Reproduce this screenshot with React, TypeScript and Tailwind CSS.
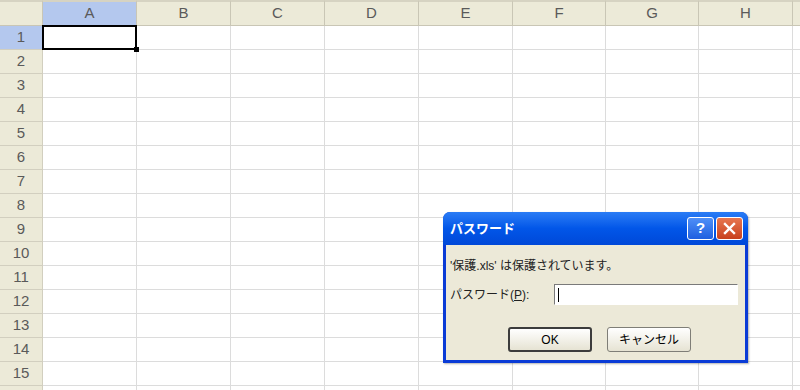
import React from 'react';

const cols = ['A', 'B', 'C', 'D', 'E', 'F', 'G', 'H', ''];
const rows = Array.from({ length: 16 }, (_, i) => i + 1);

function ColHeader({ label, active }: { label: string; active: boolean }) {
  return (
    <div
      className={
        'flex items-center justify-center border-t-2 border-t-[#d6d3c2] border-r border-b border-[#c9c6b5] text-[15px] text-[#5a5a5a] ' +
        (active ? 'bg-[#b4c8ee]' : 'bg-[#ecead8]')
      }
    >
      {label}
    </div>
  );
}

function RowHeader({ n }: { n: number }) {
  return (
    <div
      className={
        'flex items-center justify-center border-r border-b border-[#d2cfbf] text-[15px] text-[#5a5a5a] ' +
        (n === 1 ? 'bg-[#b4c8ee]' : 'bg-[#ecead8]')
      }
    >
      {n <= 15 ? n : ''}
    </div>
  );
}

function Cell({ selected }: { selected: boolean }) {
  if (selected) {
    return (
      <div className="relative border-r border-b border-[#dcdcdc] bg-white">
        <div className="absolute -left-[1px] -top-[1px] right-[-1px] bottom-[-1px] border-2 border-black" />
        <div className="absolute right-[-3px] bottom-[-3px] h-[5px] w-[5px] bg-black" />
      </div>
    );
  }
  return <div className="border-r border-b border-[#dcdcdc] bg-white" />;
}

function XpButton({ label, primary }: { label: string; primary?: boolean }) {
  return (
    <div
      className={
        'flex h-[25px] w-[84px] items-center justify-center rounded-[3px] bg-gradient-to-b from-white to-[#e6e3d3] text-[12px] text-black ' +
        (primary ? 'border-2 border-[#3c3c3c]' : 'border border-[#7f7e77]')
      }
    >
      {label}
    </div>
  );
}

function PasswordDialog() {
  return (
    <div className="absolute left-[443px] top-[212px] flex h-[151px] w-[305px] flex-col overflow-hidden rounded-t-[7px] bg-[#0a3bd6] shadow-[1px_1px_2px_rgba(0,0,0,0.3)]">
      <div className="flex h-[33px] items-center justify-between bg-gradient-to-b from-[#2a7cf5] via-[#0256e8] to-[#0048d8] pl-[7px] pr-[5px]">
        <span className="text-[13px] font-bold text-white">パスワード</span>
        <div className="flex gap-[2px]">
          <div className="flex h-[23px] w-[27px] items-center justify-center rounded-[3px] border border-white bg-gradient-to-b from-[#4f8ff7] to-[#1f5fe0] text-[15px] font-bold text-white">
            ?
          </div>
          <div className="flex h-[23px] w-[27px] items-center justify-center rounded-[3px] border border-white bg-gradient-to-b from-[#e7764f] to-[#c8401c]">
            <svg width="13" height="13" viewBox="0 0 13 13">
              <path d="M2 2 L11 11 M11 2 L2 11" stroke="white" strokeWidth="2.4" strokeLinecap="square" />
            </svg>
          </div>
        </div>
      </div>
      <div className="mx-[3px] mb-[3px] flex flex-1 flex-col bg-[#ece9d8] px-[4px] text-[12px] text-[#222]">
        <div className="mt-[12px]">'保護.xls' は保護されています。</div>
        <div className="mt-[9px] flex items-center">
          <span className="w-[104px]">パスワード(<span className="underline">P</span>):</span>
          <div className="h-[21px] w-[184px] border border-t-[#7a7a7a] border-l-[#7a7a7a] border-b-white border-r-white bg-white px-[3px]">
            <div className="mt-[3px] h-[14px] w-[1px] bg-black" />
          </div>
        </div>
        <div className="mt-[22px] flex gap-[15px] pl-[58px]">
          <XpButton label="OK" primary />
          <XpButton label="キャンセル" />
        </div>
      </div>
    </div>
  );
}

export default function App() {
  return (
    <div
      className="relative h-[390px] w-[800px] overflow-hidden bg-white"
      style={{ fontFamily: '"Liberation Sans", "Noto Sans CJK JP", sans-serif' }}
    >
      <div className="grid grid-cols-[43px_94px_94px_94px_94px_94px_93px_93px_94px_60px] grid-rows-[26px_repeat(16,24px)]">
        <div className="border-t-2 border-t-[#d6d3c2] border-r border-b border-[#c9c6b5] bg-[#ecead8]" />
        {cols.map((c, i) => (
          <ColHeader key={i} label={c} active={c === 'A'} />
        ))}
        {rows.map(n => (
          <React.Fragment key={n}>
            <RowHeader n={n} />
            {cols.map((c, i) => (
              <Cell key={i} selected={n === 1 && c === 'A'} />
            ))}
          </React.Fragment>
        ))}
      </div>
      <PasswordDialog />
    </div>
  );
}
